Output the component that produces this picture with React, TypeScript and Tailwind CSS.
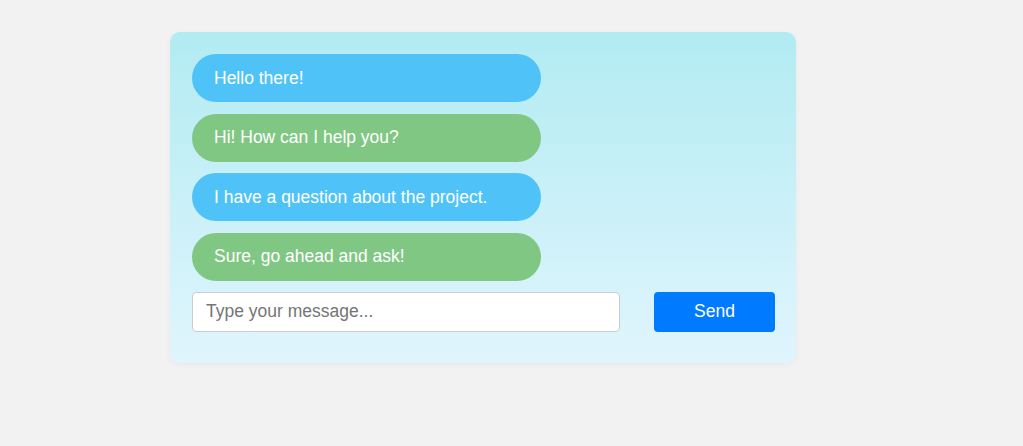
import React from 'react'

const messages = [
  { text: 'Hello there!', color: 'bg-[#4fc3f7]' },
  { text: 'Hi! How can I help you?', color: 'bg-[#81c784]' },
  { text: 'I have a question about the project.', color: 'bg-[#4fc3f7]' },
  { text: 'Sure, go ahead and ask!', color: 'bg-[#81c784]' },
]

const App = () => {
  return (
    <div className="min-h-[446px] bg-[#f2f2f2] pt-8 pl-[170px] font-['Liberation_Sans',Arial,sans-serif]">
      <div className="w-[626px] rounded-[10px] bg-gradient-to-b from-[#b2ebf2] to-[#e0f5fd] pl-[22px] pr-[21px] pt-[22px] pb-[31px] shadow-[0_2px_6px_rgba(0,0,0,0.04)]">
        <div className="flex flex-col gap-[11.5px]">
          {messages.map((m) => (
            <div
              key={m.text}
              className={`w-[349px] h-[48px] rounded-[24px] ${m.color} px-[22px] flex items-center text-white text-[17.5px]`}
            >
              {m.text}
            </div>
          ))}
        </div>
        <div className="mt-[11px] flex items-center justify-between">
          <input
            type="text"
            placeholder="Type your message..."
            className="w-[428px] h-[40px] rounded-[4px] border border-[#cccccc] bg-white pl-[13px] pr-3 text-[17.5px] text-gray-800 placeholder:text-[#757575] outline-none"
          />
          <button className="w-[121px] h-[40px] rounded-[4px] bg-[#007bff] text-white text-[17.5px]">
            Send
          </button>
        </div>
      </div>
    </div>
  )
}

export default App
